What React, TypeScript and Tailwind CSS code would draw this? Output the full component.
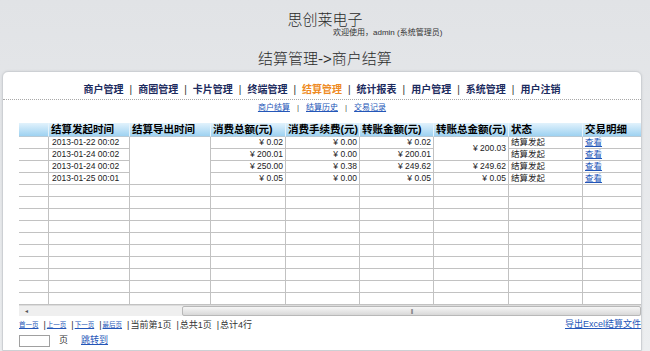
import React from "react";

const navItems = ["商户管理", "商圈管理", "卡片管理", "终端管理", "结算管理", "统计报表", "用户管理", "系统管理", "用户注销"];
const subNav = ["商户结算", "结算历史", "交易记录"];
const headers = ["", "结算发起时间", "结算导出时间", "消费总额(元)", "消费手续费(元)", "转账金额(元)", "转账总金额(元)", "状态", "交易明细"];
const widths = ["w-[30px]", "w-[81px]", "w-[81px]", "w-[75px]", "w-[74px]", "w-[74px]", "w-[75px]", "w-[74px]", "w-[75px]"];

const rows = [
  { start: "2013-01-22 00:02", total: "0.02", fee: "0.00", transfer: "0.02" },
  { start: "2013-01-24 00:02", total: "200.01", fee: "0.00", transfer: "200.01" },
  { start: "2013-01-24 00:02", total: "250.00", fee: "0.38", transfer: "249.62" },
  { start: "2013-01-25 00:01", total: "0.05", fee: "0.00", transfer: "0.05" },
];
// 转账总金额: 第1、2行合并
const transferTotals: (string | null)[] = ["200.03", null, "249.62", "0.05"];

const cell = "border-r border-b border-[#c2c2c2] p-0 h-[12px] leading-[11px] text-[8.5px] text-[#222]";
const money = `${cell} text-right pr-[2px]`;

export default function App() {
  return (
    <div className="w-[650px] h-[351px] overflow-hidden flex flex-col bg-gradient-to-b from-[#e1e3e6] to-[#eceef0] font-['Liberation_Sans','Noto_Sans_CJK_SC',sans-serif] text-[#333]">
      {/* Header */}
      <div className="pt-[12px] text-center text-[15px] leading-[16px] font-light text-[#2b2b2b]">思创莱电子</div>
      <div className="pl-[333px] text-[8px] leading-[9px] text-[#333]">欢迎使用，admin (系统管理员)</div>
      <div className="mt-[13px] text-center text-[15px] leading-[18px] font-light text-[#2b2b2b]">结算管理-&gt;商户结算</div>

      {/* Panel */}
      <div className="mt-[3px] ml-[2px] w-[640px] flex-1 rounded-t-[6px] border border-[#cdd0d4] bg-white shadow-[0_0_3px_rgba(0,0,0,0.08)]">
        <nav className="h-[27px] pt-[8px] flex items-center justify-center text-[10px] font-bold text-[#1c2b5e]">
          {navItems.map((item, i) => (
            <React.Fragment key={item}>
              {i > 0 && <span className="mx-[6px] font-normal text-[#333]">|</span>}
              <span className={item === "结算管理" ? "text-[#ee8a23]" : ""}>{item}</span>
            </React.Fragment>
          ))}
        </nav>
        <div className="border-t border-dotted border-[#a8a8a8]" />
        <div className="h-[16px] flex items-center justify-center text-[8px]">
          {subNav.map((item, i) => (
            <React.Fragment key={item}>
              {i > 0 && <span className="mx-[7px] text-[#555]">|</span>}
              <a href="#" className="text-[#2456b8] underline">{item}</a>
            </React.Fragment>
          ))}
        </div>

        {/* Table */}
        <div className="ml-[16px] mt-[7px] w-[622px] overflow-hidden">
          <table className="table-fixed border-separate border-spacing-0 w-[639px]">
            <colgroup>
              {widths.map((w, i) => (
                <col key={i} className={w} />
              ))}
            </colgroup>
            <thead>
              <tr>
                {headers.map((h, i) => (
                  <th
                    key={i}
                    className="h-[13px] p-0 pl-[2px] text-left text-[10.5px] leading-[13px] font-bold text-black bg-gradient-to-b from-[#e2f2fc] to-[#9dd2f1] border-r border-[#e6f3fb] border-b border-b-[#b9c9d4] whitespace-nowrap overflow-hidden"
                  >
                    {h}
                  </th>
                ))}
              </tr>
            </thead>
            <tbody>
              {rows.map((r, i) => (
                <tr key={i}>
                  <td className={cell} />
                  <td className={`${cell} pl-[3px] whitespace-nowrap`}>{r.start}</td>
                  {i === 0 && <td rowSpan={4} className="border-r border-b border-[#c2c2c2] p-0" />}
                  <td className={money}>¥ {r.total}</td>
                  <td className={money}>¥ {r.fee}</td>
                  <td className={money}>¥ {r.transfer}</td>
                  {transferTotals[i] !== null && (
                    <td rowSpan={i === 0 ? 2 : 1} className={`${money} align-middle`}>
                      ¥ {transferTotals[i]}
                    </td>
                  )}
                  <td className={`${cell} pl-[2px]`}>结算发起</td>
                  <td className={`${cell} pl-[2px]`}>
                    <a href="#" className="text-[#2456b8] underline">查看</a>
                  </td>
                </tr>
              ))}
              {Array.from({ length: 10 }).map((_, i) => (
                <tr key={`e${i}`}>
                  {headers.map((_, j) => (
                    <td key={j} className={`${cell} h-[11.8px]`} />
                  ))}
                </tr>
              ))}
            </tbody>
          </table>

          {/* Horizontal scrollbar */}
          <div className="h-[11px] flex bg-[#efefef] border-t border-[#dcdcdc]">
            <div className="w-[14px] flex items-center justify-center text-[6px] text-[#555]">◂</div>
            <div className="w-[149px]" />
            <div className="flex-1 rounded-[2px] border border-[#b8b8b8] bg-gradient-to-b from-[#f6f6f6] to-[#d8d8d8] flex items-center justify-center">
              <span className="text-[6px] leading-[6px] tracking-[-1px] text-[#666]">|||</span>
            </div>
          </div>
        </div>

        {/* Pagination */}
        <div className="ml-[16px] mt-[4px] w-[622px] flex items-center justify-between h-[10px]">
          <div className="flex items-center text-[9px] leading-[10px] text-[#333]">
            {["首一页", "上一页", "下一页", "最后页"].map((p) => (
              <React.Fragment key={p}>
                <a href="#" className="text-[6.5px] text-[#2456b8] underline">{p}</a>
                <span className="ml-[5px] mr-[1px]">|</span>
              </React.Fragment>
            ))}
            <span>当前第1页</span>
            <span className="ml-[5px] mr-[1px]">|</span>
            <span>总共1页</span>
            <span className="ml-[5px] mr-[1px]">|</span>
            <span>总计4行</span>
          </div>
          <a href="#" className="text-[9px] text-[#2456b8] underline">导出Excel结算文件</a>
        </div>
        <div className="ml-[16px] mt-[4px] flex items-center text-[9px] text-[#333]">
          <input className="w-[31px] h-[12px] border border-[#a0a0a0] bg-white" />
          <span className="ml-[9px]">页</span>
          <a href="#" className="ml-[13px] text-[#2456b8] underline">跳转到</a>
        </div>
      </div>
    </div>
  );
}
